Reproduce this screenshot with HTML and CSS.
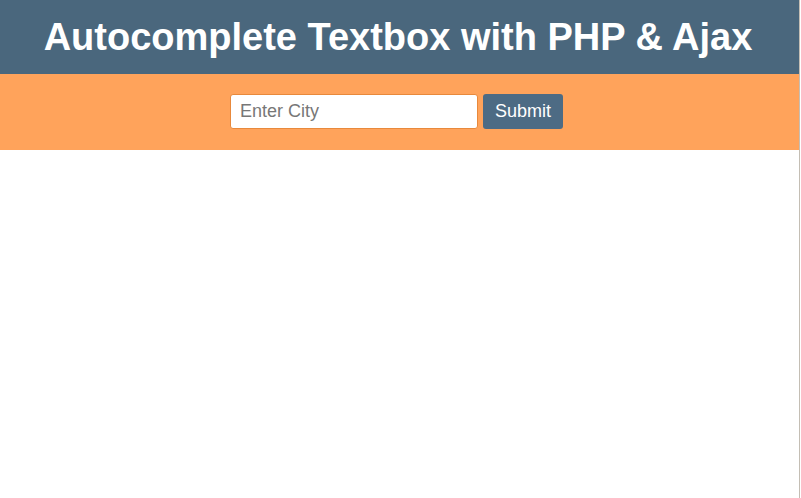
FILE: index.html
```html
<!DOCTYPE html>
<html>
<head>
<meta charset="utf-8">
<title>Autocomplete Textbox with PHP &amp; Ajax</title>
<link rel="stylesheet" href="styles.css">
</head>
<body>
<div class="page">
  <header class="header">
    <h1 class="title">Autocomplete Textbox with PHP &amp; Ajax</h1>
  </header>
  <div class="search">
    <form class="search-form">
      <input class="city-input" type="text" placeholder="Enter City">
      <button class="submit-btn" type="button">Submit</button>
    </form>
  </div>
</div>
</body>
</html>
```
FILE: styles.css
```css
html, body {
  margin: 0;
  padding: 0;
  background: #ffffff;
}
body {
  font-family: "Liberation Sans", Arial, sans-serif;
}
.page {
  width: 799px;
  min-height: 498px;
  border-right: 1px solid #c4beb4;
}
.header {
  background: #4a677d;
  height: 74px;
  display: flex;
  align-items: center;
  justify-content: center;
}
.title {
  margin: 0 3px 0 0;
  color: #ffffff;
  font-size: 38px;
  font-weight: bold;
  line-height: 1;
  padding-bottom: 1px;
}
.search {
  background: #ffa35b;
  height: 76px;
  display: flex;
  align-items: center;
  justify-content: center;
}
.search-form {
  display: flex;
  gap: 5px;
  margin: 0 6px 1px 0;
}
.city-input {
  box-sizing: border-box;
  width: 248px;
  height: 35px;
  border: 1px solid #e8893c;
  border-radius: 3px;
  padding: 0 9px;
  font-family: "Liberation Sans", Arial, sans-serif;
  font-size: 18px;
  color: #333;
  background: #fff;
  outline: none;
}
.city-input::placeholder {
  color: #777777;
}
.submit-btn {
  box-sizing: border-box;
  width: 80px;
  height: 35px;
  border: none;
  border-radius: 3px;
  background: #4d6b84;
  color: #ffffff;
  font-family: "Liberation Sans", Arial, sans-serif;
  font-size: 18px;
  padding: 0;
}
```
